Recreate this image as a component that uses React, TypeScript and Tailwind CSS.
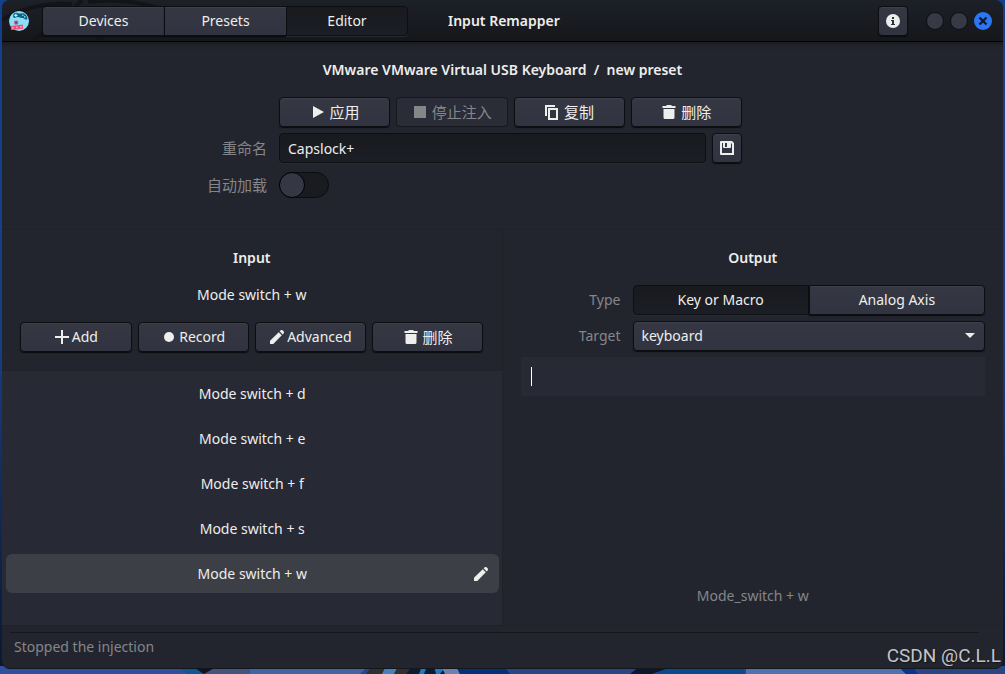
import React, { useState } from "react";
import clsx from "clsx";

type IconProps = { className?: string };

const PlayIcon: React.FC<IconProps> = ({ className }) => (
   <svg viewBox="0 0 16 16" className={clsx("h-4 w-4", className)} fill="currentColor" aria-hidden="true">
      <path d="M3 2v12l11-6z" />
   </svg>
);

const StopIcon: React.FC<IconProps> = ({ className }) => (
   <svg viewBox="0 0 16 16" className={clsx("h-4 w-4", className)} fill="currentColor" aria-hidden="true">
      <path d="M2 2h12v12H2z" />
   </svg>
);

const CopyIcon: React.FC<IconProps> = ({ className }) => (
   <svg viewBox="0 0 16 16" className={clsx("h-4 w-4", className)} fill="currentColor" aria-hidden="true">
      <path d="M1 1h10v2H3v9H1z" />
      <path d="M4 4h10v12H4zM6 6v8h6V6z" fillRule="evenodd" />
   </svg>
);

const TrashIcon: React.FC<IconProps> = ({ className }) => (
   <svg viewBox="0 0 16 16" className={clsx("h-4 w-4", className)} fill="currentColor" aria-hidden="true">
      <path d="M1.500 2H5l1-1h4l1 1h3.500v2h-13zM2.500 5h11v8.500a1.500 1.500 0 0 1-1.500 1.500H4a1.500 1.500 0 0 1-1.500-1.500z" />
   </svg>
);

const SaveIcon: React.FC<IconProps> = ({ className }) => (
   <svg viewBox="0 0 16 16" className={clsx("h-4 w-4", className)} fill="currentColor" aria-hidden="true">
      <path
         d="M2 1h11l2 2v12H2a1 1 0 0 1-1-1V2a1 1 0 0 1 1-1zM3 3v10h10V4l-1-1v4a1 1 0 0 1-1 1H5a1 1 0 0 1-1-1V3zM6 3v4h2V3z"
         fillRule="evenodd"
      />
   </svg>
);

const PlusIcon: React.FC<IconProps> = ({ className }) => (
   <svg viewBox="0 0 16 16" className={clsx("h-4 w-4", className)} fill="currentColor" aria-hidden="true">
      <path d="M7 1h2v6h6v2H9v6H7V9H1V7h6z" />
   </svg>
);

const DotIcon: React.FC<IconProps> = ({ className }) => (
   <svg viewBox="0 0 16 16" className={clsx("h-4 w-4", className)} fill="currentColor" aria-hidden="true">
      <circle cx="8" cy="8" r="5" />
   </svg>
);

const PencilIcon: React.FC<IconProps> = ({ className }) => (
   <svg viewBox="0 0 16 16" className={clsx("h-4 w-4", className)} fill="currentColor" aria-hidden="true">
      <path d="M9.700 3.200l3.100 3.100L4.300 15H1v-3.200z" />
      <path d="M10.600 2.300l.9-.9c.6-.6 1.600-.6 2.200 0l.9.900c.6.6.6 1.600 0 2.200l-.9.900z" />
   </svg>
);

const InfoIcon: React.FC<IconProps> = ({ className }) => (
   <svg viewBox="0 0 16 16" className={clsx("h-4 w-4", className)} aria-hidden="true">
      <circle cx="8" cy="8" r="7" fill="#eeeeec" />
      <path d="M7 4h2v2H7zM6 7h3v4h1v1H6v-1h1V8H6z" fill="#2f323d" />
   </svg>
);

const Logo: React.FC = () => (
   <svg viewBox="0 0 22 22" className="h-[22px] w-[22px] shrink-0" role="img" aria-label="Input Remapper">
      <circle cx="11" cy="11" r="10" fill="#8adff8" />
      <path
         d="M6.500 3c1.500-.9 2.800.2 4.500.5 1.700.3 3-.8 4.800-.1 2.200.9 4 3.800 3.500 5.600-.4 1.200-1.800.9-2.700 0-.9-.9-1.700-1-2.800-1-1.500 0-2.500-1.200-4.300-1C8 7.200 7 8.300 5.900 7.800 4.700 7.200 4.900 4 6.500 3z"
         fill="#0f6080"
      />
      <path d="M7.300 3.800h1.100v1h1v1.100h-1v1H7.300v-1h-1V4.800h1z" fill="#c8f2fc" />
      <circle cx="14.800" cy="5.200" r=".8" fill="#8adff8" />
      <circle cx="16.700" cy="6.900" r=".8" fill="#8adff8" />
      <path d="M6.500 11.200l3-.3.400 3-3 .3z" fill="#4a4f78" stroke="#d9567f" strokeWidth=".9" />
      <g fill="#f2a3bd" stroke="#ee4d76" strokeWidth="1.200">
         <path d="M3.300 16.500l2.900-.3.300 2.900-2.900.3zM7.300 16l2.900-.3.300 2.900-2.900.3zM11.300 15.500l2.900-.3.300 2.900-2.900.3z" />
      </g>
   </svg>
);

const raised =
   "border border-[#0d0e12] bg-linear-to-b from-[#353843] to-[#313440] shadow-[inset_0_1px_0_#3d404a,0_1px_1px_#0b0c0f]";
const sunken = "border border-[#0e0f12] bg-linear-to-b from-[#191a1e] to-[#1b1e25] shadow-[0_1px_0_#292b32]";

type ToolButtonProps = {
   icon: React.ReactNode;
   disabled?: boolean;
   className?: string;
   children: React.ReactNode;
};

const ToolButton: React.FC<ToolButtonProps> = ({ icon, disabled, className, children }) => (
   <button
      type="button"
      disabled={disabled}
      className={clsx(
         "flex h-[30px] items-center justify-center rounded-sm",
         className ?? "gap-1 text-[15px]",
         disabled ? "border border-[#17181d] bg-[#2a2c37] text-[#85868a]" : raised
      )}
   >
      {icon}
      {children}
   </button>
);

const Wallpaper: React.FC = () => (
   <svg
      viewBox="0 0 1005 8"
      preserveAspectRatio="none"
      className="absolute inset-x-0 bottom-0 h-2 w-full"
      aria-hidden="true"
   >
      <path d="M0 0h1005v8H0z" fill="#2b4483" />
      <path d="M0 0h176l12 8H0z" fill="#2f509c" />
      <path d="M250 0h118l-8 8H250z" fill="#4164a3" />
      <path d="M176 0h16l12 8h-16z" fill="#0b5a94" />
      <path d="M192 0h26v8h-14z" fill="#10131f" />
      <path d="M218 0h32v8h-46z" fill="#44557c" />
      <path d="M372 0h68v8h-74z" fill="#30302f" />
      <path d="M386 0h12l-4 8h-12z" fill="#4482b8" />
      <path d="M412 0h28l6 8h-40z" fill="#0a1c33" />
      <path d="M422 0h5l-3 8h-5zM434 0h12l-6 8h-4z" fill="#1c7cc0" />
      <path d="M441 0h15l4 8h-15z" fill="#6f80b0" />
      <path d="M456 0h48l6 8h-50z" fill="#02307a" />
      <path d="M668 0h76v8h-88z" fill="#0a4a8c" />
      <path d="M640 0h34l-22 8h-22z" fill="#0b1730" />
      <path d="M746 0h152l8 8H746z" fill="#4d72ae" />
      <path d="M898 0h14l6 8h-12z" fill="#06378c" />
   </svg>
);

const TABS = ["Devices", "Presets", "Editor"];
const MAPPINGS = ["d", "e", "f", "s", "w"];
const OUTPUT_TYPES = ["Key or Macro", "Analog Axis"];

const TitleBar: React.FC = () => {
   const [tab, setTab] = useState("Editor");

   return (
      <header className="relative flex h-[42px] items-center border-b border-black bg-linear-to-b from-[#1c2027] to-[#16171b] pr-[11px] pl-1.5">
         <svg className="absolute top-0 left-0 h-10 w-40" viewBox="0 0 160 40" fill="none" aria-hidden="true">
            <path d="M0 20Q30 2 70 4M30 40Q50 30 80 0M95 40l12-8M86 2q40-4 70 6" stroke="#121418" strokeWidth="4" />
         </svg>
         <div className="relative flex">
            <Logo />
         </div>
         <nav className="relative ml-3 grid w-[366px] grid-cols-3">
            {TABS.map((name) => (
               <button
                  key={name}
                  type="button"
                  onClick={() => setTab(name)}
                  className={clsx(
                     "-mr-px h-[30px] first:rounded-l-sm last:mr-0 last:rounded-r-sm",
                     name === tab ? sunken : raised
                  )}
               >
                  {name}
               </button>
            ))}
         </nav>
         <h1 className="ml-10 flex-1 font-semibold">Input Remapper</h1>
         <button
            type="button"
            aria-label="About"
            className={clsx("mr-[18px] flex h-[30px] w-[30px] items-center justify-center rounded-sm", raised)}
         >
            <InfoIcon />
         </button>
         <div className="flex gap-1.5">
            <button type="button" aria-label="Minimize" className="h-[18px] w-[18px] rounded-full border border-[#0c0d10] bg-[#373a44]" />
            <button type="button" aria-label="Maximize" className="h-[18px] w-[18px] rounded-full border border-[#0c0d10] bg-[#373a44]" />
            <button
               type="button"
               aria-label="Close"
               className="flex h-[18px] w-[18px] items-center justify-center rounded-full bg-[#2a76f5] text-[#11192b]"
            >
               <svg viewBox="0 0 10 10" className="h-2.5 w-2.5" fill="none" stroke="currentColor" strokeWidth="2.400" aria-hidden="true">
                  <path d="M1.500 1.500l7 7M8.500 1.500l-7 7" />
               </svg>
            </button>
         </div>
      </header>
   );
};

const PresetForm: React.FC = () => (
   <section className="border-b border-[#202229] pt-[18px] pb-[30px] shadow-[inset_0_5px_5px_-3px_#191b20]">
      <h2 className="text-center font-semibold whitespace-pre">VMware VMware Virtual USB Keyboard  /  new preset</h2>
      <div className="pl-4">
         <div className="mx-auto mt-[17px] grid w-[463px] grid-cols-4 gap-1.5">
            <ToolButton icon={<PlayIcon />}>应用</ToolButton>
            <ToolButton icon={<StopIcon />} disabled>停止注入</ToolButton>
            <ToolButton icon={<CopyIcon />}>复制</ToolButton>
            <ToolButton icon={<TrashIcon />}>删除</ToolButton>
         </div>
         <div className="mt-1.5 grid grid-cols-[1fr_463px_1fr] items-center gap-y-2">
            <label htmlFor="rename" className="pr-3 text-right text-[15px] text-[#85868a]">重命名</label>
            <div className="flex gap-1.5">
               <input id="rename" defaultValue="Capslock+" className={clsx("h-[30px] min-w-0 flex-1 rounded-sm px-2 outline-none", sunken)} />
               <button
                  type="button"
                  aria-label="Save"
                  className={clsx("flex h-[30px] w-[30px] items-center justify-center rounded-sm", raised)}
               >
                  <SaveIcon />
               </button>
            </div>
            <span />
            <label htmlFor="autoload" className="pr-3 text-right text-[15px] text-[#85868a]">自动加载</label>
            <input
               id="autoload"
               type="checkbox"
               role="switch"
               className="my-px h-[26px] w-[50px] appearance-none rounded-full border border-[#0c0d10] bg-[#191b20] before:-mt-px before:-ml-px before:block before:h-[26px] before:w-[26px] before:rounded-full before:border before:border-black before:bg-[#353844] checked:bg-[#2a76f5] checked:before:ml-[23px]"
            />
            <span />
         </div>
      </div>
   </section>
);

const InputPane: React.FC = () => {
   const [selected, setSelected] = useState("w");

   return (
      <section className="flex flex-col border-r border-[#1f2127]">
         <h2 className="mt-[18px] text-center font-semibold">Input</h2>
         <p className="mt-[17px] text-center">Mode switch + {selected}</p>
         <div className="mx-auto mt-[17px] grid w-[463px] grid-cols-4 gap-1.5">
            <ToolButton icon={<PlusIcon />} className="gap-0.5">Add</ToolButton>
            <ToolButton icon={<DotIcon />} className="gap-0.5">Record</ToolButton>
            <ToolButton icon={<PencilIcon />} className="gap-0.5">Advanced</ToolButton>
            <ToolButton icon={<TrashIcon />}>删除</ToolButton>
         </div>
         <ul className="mt-[18px] flex flex-1 flex-col gap-1.5 border-t border-[#22242b] bg-[#272935] px-1 pr-[3px] pt-[3px]">
            {MAPPINGS.map((key) => (
               <li key={key} className={clsx("relative rounded-md", key === selected && "bg-[#3d3f47]")}>
                  <button type="button" onClick={() => setSelected(key)} className="h-[39px] w-full">
                     Mode switch + {key}
                  </button>
                  {key === selected && (
                     <button type="button" aria-label="Rename" className="absolute top-3 right-2.5">
                        <PencilIcon />
                     </button>
                  )}
               </li>
            ))}
         </ul>
      </section>
   );
};

const OutputPane: React.FC = () => {
   const [type, setType] = useState("Key or Macro");

   return (
      <section className="flex flex-col px-[18px]">
         <h2 className="mt-[18px] text-center font-semibold">Output</h2>
         <div className="mt-[17px] grid grid-cols-[100px_1fr] items-center gap-x-3 gap-y-1.5">
            <span id="type-label" className="text-right text-[#85868a]">Type</span>
            <div role="group" aria-labelledby="type-label" className="grid grid-cols-2">
               {OUTPUT_TYPES.map((name) => (
                  <button
                     key={name}
                     type="button"
                     onClick={() => setType(name)}
                     className={clsx("h-[30px] first:rounded-l-sm last:rounded-r-sm", name === type ? sunken : raised)}
                  >
                     {name}
                  </button>
               ))}
            </div>
            <label htmlFor="target" className="text-right text-[#85868a]">Target</label>
            <div className="relative">
               <select id="target" className={clsx("block h-[30px] w-full appearance-none rounded-sm px-2 outline-none", raised)}>
                  <option>keyboard</option>
                  <option>mouse</option>
                  <option>gamepad</option>
               </select>
               <svg viewBox="0 0 10 5" className="pointer-events-none absolute top-3 right-2.5 h-[5px] w-2.5" fill="currentColor" aria-hidden="true">
                  <path d="M0 0h10L5 5z" />
               </svg>
            </div>
         </div>
         <div className="relative mt-1.5">
            <textarea aria-label="Output code" className="block h-[39px] w-full resize-none bg-[#272935] px-2.5 py-2 outline-none" />
            <span className="absolute top-2.5 left-2.5 h-[19px] w-px bg-white" />
         </div>
         <p className="mt-auto mb-[19px] text-center text-[#85868a]">Mode_switch + w</p>
      </section>
   );
};

const App: React.FC = () => {
   return (
      <div className="relative flex min-h-screen flex-col bg-linear-to-b from-[#12408f] via-[#173f84] to-[#0a1730] px-0.5 pb-[5px] font-['Noto_Sans','Noto_Sans_CJK_SC',sans-serif] text-sm leading-5 text-[#eeeeec]">
         <Wallpaper />
         <div className="relative flex flex-1 flex-col overflow-hidden rounded-lg border-b border-[#15171c] bg-[#23252e]">
            <TitleBar />
            <PresetForm />
            <main className="grid flex-1 grid-cols-2">
               <InputPane />
               <OutputPane />
            </main>
            <footer className="border-t border-[#202229] px-2 pt-1.5 pb-[11px] text-[#85868a]">
               <p className="mr-4 border-t border-[#15171c] px-1 pt-1">Stopped the injection</p>
            </footer>
         </div>
         <span className="absolute right-1 bottom-1.5 font-['Roboto',sans-serif] text-[19px] leading-6 text-[#c3c4c7] [text-shadow:1px_1px_1px_#15161a]">
            CSDN @C.L.L
         </span>
      </div>
   );
};

export default App;
